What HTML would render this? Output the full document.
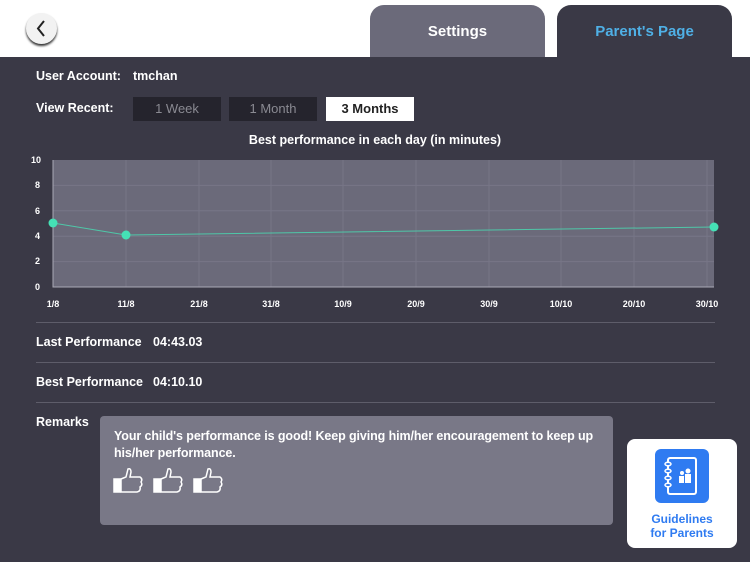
<!DOCTYPE html>
<html><head><style>
body{margin:0;width:750px;height:562px;background:#fff;font-family:"Liberation Sans",sans-serif;position:relative;overflow:hidden}
.a{position:absolute}
.main{left:0;top:57px;width:750px;height:505px;background:#3a3946}
.t{color:#fff;font-weight:bold;font-size:12.5px}
.btn{position:absolute;top:97px;height:24px;width:88px;text-align:center;line-height:24px;font-size:13px}
.hr{position:absolute;left:36px;width:679px;height:1px;background:#5e5d6a}
</style></head><body>
<div class="a" style="left:26px;top:13px;width:31px;height:31px;border-radius:50%;background:#f2f2f2;box-shadow:0 2px 2px #333"></div>
<svg class="a" style="left:26px;top:13px" width="31" height="31"><path d="M18 8 L12 15.5 L18 23" stroke="#222" stroke-width="2" fill="none"/></svg>
<div class="a" style="left:370px;top:5px;width:175px;height:55px;background:#6b6a7a;border-radius:14px 14px 0 0;color:#fff;font-weight:bold;font-size:15px;text-align:center;line-height:54px">Settings</div>
<div class="a" style="left:557px;top:5px;width:175px;height:55px;background:#3a3946;border-radius:14px 14px 0 0;color:#4fb0e6;font-weight:bold;font-size:15px;text-align:center;line-height:54px">Parent's Page</div>
<div class="a main"></div>
<div class="a t" style="left:36px;top:69px">User Account:</div>
<div class="a t" style="left:133px;top:69px">tmchan</div>
<div class="a t" style="left:36px;top:101px">View Recent:</div>
<div class="btn" style="left:133px;background:#25242d;color:#8a8a92">1 Week</div>
<div class="btn" style="left:229px;background:#25242d;color:#8a8a92">1 Month</div>
<div class="btn" style="left:326px;background:#fff;color:#222;font-weight:bold">3 Months</div>
<div class="a t" style="left:0;width:750px;text-align:center;top:133px">Best performance in each day (in minutes)</div>
<svg class="a" style="left:0;top:150px" width="750" height="165">
<rect x="53" y="10" width="661" height="127" fill="#6b6a7a"/>
<g stroke="#777687" stroke-width="1">
<line x1="53" y1="35.4" x2="714" y2="35.4"/><line x1="53" y1="60.8" x2="714" y2="60.8"/><line x1="53" y1="86.2" x2="714" y2="86.2"/><line x1="53" y1="111.6" x2="714" y2="111.6"/>
<line x1="126" y1="10" x2="126" y2="137"/><line x1="199" y1="10" x2="199" y2="137"/><line x1="271" y1="10" x2="271" y2="137"/><line x1="343" y1="10" x2="343" y2="137"/><line x1="416" y1="10" x2="416" y2="137"/><line x1="489" y1="10" x2="489" y2="137"/><line x1="561" y1="10" x2="561" y2="137"/><line x1="634" y1="10" x2="634" y2="137"/><line x1="707" y1="10" x2="707" y2="137"/>
</g>
<path d="M53 10V137H714" stroke="#aaa9b5" fill="none"/>
<polyline points="53,73 126,85 714,77" stroke="#4fc7a8" fill="none"/>
<circle cx="53" cy="73" r="4.5" fill="#45e0b5"/><circle cx="126" cy="85" r="4.5" fill="#45e0b5"/><circle cx="714" cy="77" r="4.5" fill="#45e0b5"/>
<g fill="#fff" font-size="9" font-weight="bold" font-family="Liberation Sans">
<text x="31" y="13">10</text><text x="35" y="38">8</text><text x="35" y="64">6</text><text x="35" y="89">4</text><text x="35" y="114">2</text><text x="35" y="140">0</text>
<g text-anchor="middle"><text x="53" y="157">1/8</text><text x="126" y="157">11/8</text><text x="199" y="157">21/8</text><text x="271" y="157">31/8</text><text x="343" y="157">10/9</text><text x="416" y="157">20/9</text><text x="489" y="157">30/9</text><text x="561" y="157">10/10</text><text x="634" y="157">20/10</text><text x="707" y="157">30/10</text></g>
</g></svg>
<div class="hr" style="top:322px"></div>
<div class="a t" style="left:36px;top:335px">Last Performance</div><div class="a t" style="left:153px;top:335px">04:43.03</div>
<div class="hr" style="top:362px"></div>
<div class="a t" style="left:36px;top:375px">Best Performance</div><div class="a t" style="left:153px;top:375px">04:10.10</div>
<div class="hr" style="top:402px"></div>
<div class="a t" style="left:36px;top:415px">Remarks</div>
<div class="a" style="left:100px;top:416px;width:513px;height:109px;background:#797887;border-radius:4px"></div>
<div class="a t" style="left:114px;top:428px;width:495px;line-height:17px;letter-spacing:-0.1px">Your child's performance is good! Keep giving him/her encouragement to keep up his/her performance.</div>
<svg class="a" style="left:112px;top:467px" width="120" height="28">
<g id="th" fill="none" stroke="#fff" stroke-width="1.5"><rect x="2" y="12" width="6" height="13" fill="#fff"/><path d="M9 12 L14 10 L16 2 Q19 1 19 5 L18 10 L28 10 Q31 12 29 15 Q31 18 28 20 Q29 24 25 25 L9 25 Z"/></g>
<use href="#th" x="40"/><use href="#th" x="80"/>
</svg>
<div class="a" style="left:627px;top:439px;width:110px;height:109px;background:#fff;border-radius:8px"></div>
<svg class="a" style="left:655px;top:449px" width="54" height="54"><rect width="54" height="54" rx="6" fill="#2f7bf1"/><rect x="13" y="9" width="28" height="36" rx="2" fill="none" stroke="#fff" stroke-width="2"/><g fill="#fff"><circle cx="33" cy="22" r="2.5"/><rect x="30" y="25" width="6" height="9"/><circle cx="27" cy="24" r="2"/><rect x="24" y="27" width="5" height="7"/></g><g stroke="#fff" fill="#2f7bf1" stroke-width="1.5"><ellipse cx="13" cy="15" rx="3" ry="1.8"/><ellipse cx="13" cy="22" rx="3" ry="1.8"/><ellipse cx="13" cy="29" rx="3" ry="1.8"/><ellipse cx="13" cy="36" rx="3" ry="1.8"/></g></svg>
<div class="a" style="left:627px;top:512px;width:110px;text-align:center;color:#2f7bf1;font-weight:bold;font-size:12px;line-height:14px">Guidelines<br>for Parents</div>
</body></html>
